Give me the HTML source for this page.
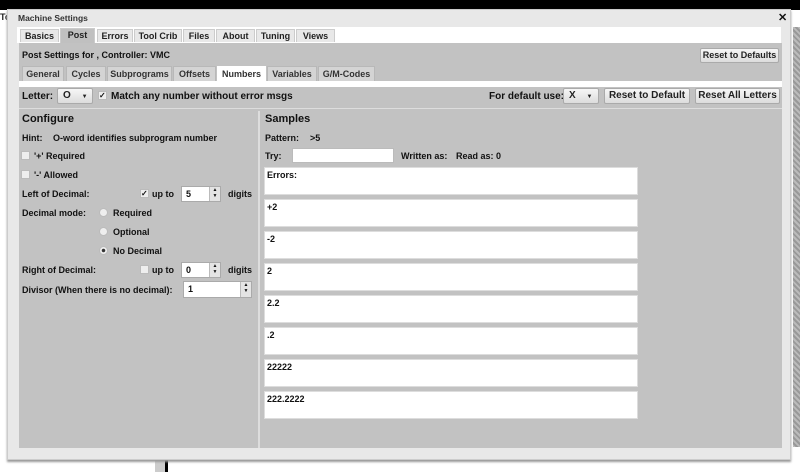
<!DOCTYPE html>
<html><head><style>
*{margin:0;padding:0;box-sizing:border-box}
body{width:800px;height:472px;position:relative;background:#fff;font-family:"Liberation Sans",sans-serif;font-weight:bold;font-size:9px;color:#111;overflow:hidden}
.a{position:absolute}
.tab{position:absolute;top:29px;height:13px;background:#e8e8e8;border:1px solid #ccc;border-bottom:none;text-align:center;line-height:12px;color:#222}
.st{position:absolute;top:66px;height:15px;background:#d4d4d4;border:1px solid #b8b8b8;border-bottom:none;text-align:center;line-height:14px;color:#333}
.btn{position:absolute;background:linear-gradient(#f6f6f6,#dcdcdc);border:1px solid #aaa;border-radius:2px;text-align:center;color:#222}
.box{position:absolute;left:264px;width:374px;height:28px;background:#fff;border:1px solid #ddd;padding:2px 2px;line-height:10px}
.cb{position:absolute;width:9px;height:9px;background:#eee;border:1px solid #bbb}
.rd{position:absolute;width:9px;height:9px;border-radius:50%;background:#eee;border:1px solid #bbb}
.inp{position:absolute;background:#fff;border:1px solid #aaa;padding-left:4px;line-height:14px}
.spin{position:absolute;right:0;top:0;width:11px;height:100%;background:#e4e4e4;border-left:1px solid #bbb;font-size:5px;text-align:center;line-height:6px}
</style></head><body>
<div class="a" style="left:0;top:0;width:800px;height:10px;background:#000"></div>
<div class="a" style="left:0;top:12px;color:#222">To</div>
<div class="a" style="left:793px;top:27px;width:7px;height:420px;background:repeating-linear-gradient(45deg,#bbb 0 2px,#999 2px 4px)"></div>
<div class="a" style="left:155px;top:458px;width:10px;height:14px;background:#ccc"></div>
<div class="a" style="left:165px;top:458px;width:3px;height:14px;background:#000"></div>
<div class="a" style="left:7px;top:9px;width:784px;height:451px;background:#e8e8e8;border:1px solid #ccc;box-shadow:0 2px 2px #999"></div>
<div class="a" style="left:18px;top:13px;color:#333;font-size:8.5px">Machine Settings</div>
<div class="a" style="left:778px;top:11px;font-size:11px">✕</div>
<div class="a" style="left:17px;top:27px;width:764px;height:16px;background:#fff"></div>
<div class="tab" style="left:20px;width:39px">Basics</div>
<div class="tab" style="left:60px;width:35px;background:#c0c0c0;top:28px;height:15px">Post</div>
<div class="tab" style="left:97px;width:36px">Errors</div>
<div class="tab" style="left:134px;width:48px">Tool Crib</div>
<div class="tab" style="left:183px;width:32px">Files</div>
<div class="tab" style="left:216px;width:39px">About</div>
<div class="tab" style="left:256px;width:39px">Tuning</div>
<div class="tab" style="left:296px;width:39px">Views</div>
<div class="a" style="left:19px;top:43px;width:763px;height:405px;background:#c2c2c2"></div>
<div class="a" style="left:22px;top:50px">Post Settings for , Controller: VMC</div>
<div class="btn" style="left:700px;top:48px;width:79px;height:15px;line-height:13px">Reset to Defaults</div>
<div class="st" style="left:22px;width:42px">General</div>
<div class="st" style="left:66px;width:40px">Cycles</div>
<div class="st" style="left:107px;width:65px">Subprograms</div>
<div class="st" style="left:173px;width:43px">Offsets</div>
<div class="st" style="left:217px;width:49px;background:#fff;border-color:#fff">Numbers</div>
<div class="st" style="left:267px;width:50px">Variables</div>
<div class="st" style="left:318px;width:57px">G/M-Codes</div>
<div class="a" style="left:19px;top:81px;width:763px;height:6px;background:#fff"></div>
<div class="a" style="left:19px;top:108px;width:763px;height:1px;background:#ddd"></div>
<div class="a" style="left:22px;top:91px;font-size:10px">Letter:</div>
<div class="btn" style="left:57px;top:88px;width:36px;height:16px;line-height:14px;text-align:left;padding-left:5px;font-size:10px">O <span style="font-size:6px;margin-left:8px">▼</span></div>
<div class="cb" style="left:98px;top:91px;font-size:8px;line-height:7px">✓</div>
<div class="a" style="left:111px;top:91px;font-size:10px">Match any number without error msgs</div>
<div class="a" style="left:489px;top:91px;font-size:10px">For default use:</div>
<div class="btn" style="left:563px;top:88px;width:36px;height:16px;line-height:14px;text-align:left;padding-left:5px;font-size:10px">X <span style="font-size:6px;margin-left:8px">▼</span></div>
<div class="btn" style="left:604px;top:88px;width:86px;height:16px;line-height:14px;font-size:10px">Reset to Default</div>
<div class="btn" style="left:695px;top:88px;width:85px;height:16px;line-height:14px;font-size:10px">Reset All Letters</div>
<div class="a" style="left:258px;top:111px;width:2px;height:337px;background:#ddd"></div>
<div class="a" style="left:22px;top:113px;font-size:11px">Configure</div>
<div class="a" style="left:22px;top:133px">Hint:</div><div class="a" style="left:53px;top:133px">O-word identifies subprogram number</div>
<div class="cb" style="left:21px;top:151px"></div><div class="a" style="left:34px;top:151px">'+' Required</div>
<div class="cb" style="left:21px;top:170px"></div><div class="a" style="left:34px;top:170px">'-' Allowed</div>
<div class="a" style="left:22px;top:189px">Left of Decimal:</div>
<div class="cb" style="left:140px;top:189px;font-size:8px;line-height:7px">✓</div><div class="a" style="left:152px;top:189px">up to</div>
<div class="inp" style="left:181px;top:186px;width:40px;height:16px">5<div class="spin">▲<br>▼</div></div>
<div class="a" style="left:228px;top:189px">digits</div>
<div class="a" style="left:22px;top:208px">Decimal mode:</div>
<div class="rd" style="left:99px;top:208px"></div><div class="a" style="left:113px;top:208px">Required</div>
<div class="rd" style="left:99px;top:227px"></div><div class="a" style="left:113px;top:227px">Optional</div>
<div class="rd" style="left:99px;top:246px;background:radial-gradient(#333 0 1.5px,#eee 2px)"></div><div class="a" style="left:113px;top:246px">No Decimal</div>
<div class="a" style="left:22px;top:265px">Right of Decimal:</div>
<div class="cb" style="left:140px;top:265px"></div><div class="a" style="left:152px;top:265px">up to</div>
<div class="inp" style="left:181px;top:262px;width:40px;height:16px">0<div class="spin">▲<br>▼</div></div>
<div class="a" style="left:228px;top:265px">digits</div>
<div class="a" style="left:22px;top:285px">Divisor (When there is no decimal):</div>
<div class="inp" style="left:183px;top:281px;width:69px;height:17px">1<div class="spin">▲<br>▼</div></div>
<div class="a" style="left:265px;top:113px;font-size:11px">Samples</div>
<div class="a" style="left:265px;top:133px">Pattern:</div><div class="a" style="left:310px;top:133px">&gt;5</div>
<div class="a" style="left:265px;top:151px">Try:</div>
<div class="a" style="left:292px;top:148px;width:102px;height:15px;background:#fff;border:1px solid #bbb"></div>
<div class="a" style="left:401px;top:151px">Written as:</div><div class="a" style="left:456px;top:151px">Read as: 0</div>
<div class="box" style="top:167px">Errors:</div>
<div class="box" style="top:199px">+2</div>
<div class="box" style="top:231px">-2</div>
<div class="box" style="top:263px">2</div>
<div class="box" style="top:295px">2.2</div>
<div class="box" style="top:327px">.2</div>
<div class="box" style="top:359px">22222</div>
<div class="box" style="top:391px">222.2222</div>
</body></html>
